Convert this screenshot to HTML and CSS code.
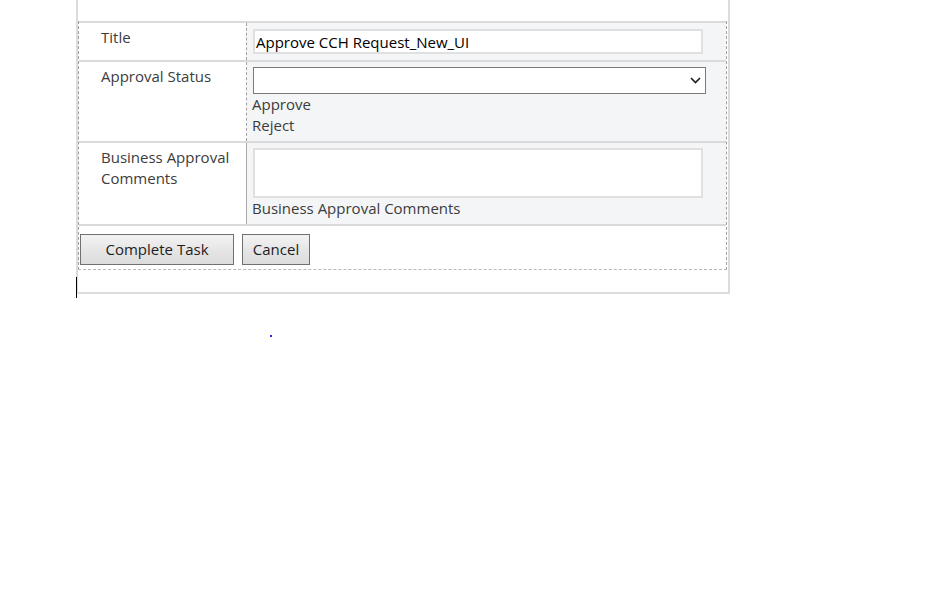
FILE: index.html
```html
<!DOCTYPE html>
<html>
<head>
<meta charset="utf-8">
<link rel="stylesheet" href="styles.css">
</head>
<body>
<div class="panel">
  <div class="form">
    <div class="row">
      <div class="label">Title</div>
      <div class="value v-title">
        <input class="text-input" type="text" value="Approve CCH Request_New_UI">
      </div>
    </div>
    <div class="row">
      <div class="label">Approval Status</div>
      <div class="value v-status">
        <div class="select">
          <svg class="chev" width="11" height="7" viewBox="0 0 11 7"><path d="M1 1 L5.5 5.5 L10 1" fill="none" stroke="#222" stroke-width="1.7"/></svg>
        </div>
        <div class="opt">Approve</div>
        <div class="opt">Reject</div>
      </div>
    </div>
    <div class="row row-solid">
      <div class="label">Business Approval<br>Comments</div>
      <div class="value v-comments">
        <textarea class="area"></textarea>
        <div class="opt">Business Approval Comments</div>
      </div>
    </div>
    <div class="row-buttons">
      <button class="btn btn-complete">Complete Task</button>
      <button class="btn btn-cancel">Cancel</button>
    </div>
  </div>
</div>
<div class="caret"></div>
<div class="dot"></div>
</body>
</html>
```

FILE: styles.css
```css
html, body {
  margin: 0;
  padding: 0;
  background: #ffffff;
}
body {
  font-family: "Open Sans", "Noto Sans", "Liberation Sans", sans-serif;
  font-size: 15px;
  line-height: 21px;
  color: #3c3c3c;
}
.panel {
  margin-left: 76px;
  width: 650px;
  padding-top: 21px;
  padding-bottom: 22px;
  border-left: 2px solid #dcdcdc;
  border-right: 2px solid #dcdcdc;
  border-bottom: 2px solid #dcdcdc;
}
.form {
  width: 647px;
  border-left: 1px dashed #a0a0a0;
  border-right: 1px dashed #a0a0a0;
  border-bottom: 1px dashed #b8b8b8;
}
.row {
  display: grid;
  grid-template-columns: 168px 1fr;
  border-top: 2px solid #dadada;
}
.label {
  box-sizing: border-box;
  padding: 4px 8px 4px 22px;
  border-right: 1px dashed #a0a0a0;
  background: #ffffff;
}
.row-solid .label {
  border-right: 1px solid #a8a8a8;
}
.value {
  background: #f4f5f6;
  padding: 5px;
}
.v-title {
  padding-top: 6px;
  padding-bottom: 6px;
}
.text-input {
  display: block;
  box-sizing: border-box;
  margin: 0 0 0 1px;
  width: 450px;
  height: 25px;
  border: 2px solid #e0e0e0;
  padding: 0 1px;
  font-family: inherit;
  font-size: 15px;
  line-height: 21px;
  color: #000000;
  background: #ffffff;
  outline: none;
}
.select {
  box-sizing: border-box;
  margin-left: 1px;
  width: 453px;
  height: 27px;
  border: 1px solid #7a7a7a;
  background: #ffffff;
  display: flex;
  align-items: center;
  justify-content: flex-end;
  padding-right: 4px;
}
.chev {
  display: block;
}
.opt {
  color: #3c3c3c;
}
.area {
  display: block;
  box-sizing: border-box;
  margin: 0 0 0 1px;
  width: 450px;
  height: 50px;
  border: 2px solid #e0e0e0;
  background: #ffffff;
  resize: none;
  padding: 0;
  font-family: inherit;
}
.row-buttons {
  border-top: 2px solid #dadada;
  padding: 8px 1px 4px 1px;
  display: flex;
  gap: 8px;
}
.btn {
  box-sizing: border-box;
  height: 31px;
  border: 1px solid #707070;
  background: linear-gradient(#f3f3f3, #e6e6e6 50%, #dcdcdc);
  font-family: inherit;
  font-size: 15px;
  line-height: 21px;
  color: #1e1e1e;
  padding: 0;
  margin: 0;
}
.btn-complete {
  width: 154px;
}
.btn-cancel {
  width: 68px;
}
.caret {
  position: absolute;
  left: 76px;
  top: 277px;
  width: 1px;
  height: 21px;
  background: #000000;
}
.dot {
  position: absolute;
  left: 270px;
  top: 335px;
  width: 2px;
  height: 2px;
  background: #2a2aff;
}
```
